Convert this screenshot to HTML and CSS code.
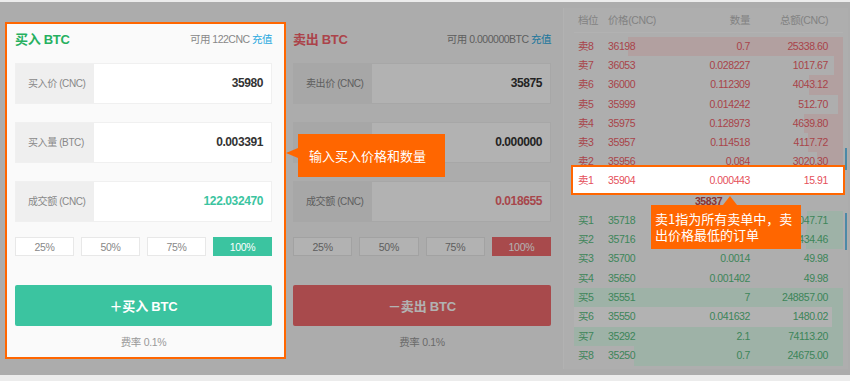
FILE: index.html
```html
<!DOCTYPE html>
<html lang="zh-CN">
<head>
    <meta charset="UTF-8">
    <meta name="viewport" content="width=device-width, initial-scale=1.0">
    <title>BTC 交易</title>
    <link rel="stylesheet" href="styles.css">
</head>
<body>
    <div class="stage">
        <div class="panel buy">
            <div class="phead">
                <h3>买入 BTC</h3>
                <span class="avail">可用 122CNC <a href="#">充值</a></span>
            </div>
            <div class="field"><label>买入价 (CNC)</label><span class="val">35980</span></div>
            <div class="field"><label>买入量 (BTC)</label><span class="val">0.003391</span></div>
            <div class="field"><label>成交额 (CNC)</label><span class="val sum">122.032470</span></div>
            <div class="pct">
                <button>25%</button>
                <button>50%</button>
                <button>75%</button>
                <button class="on">100%</button>
            </div>
            <button class="go">＋买入 BTC</button>
            <p class="fee">费率 0.1%</p>
        </div>

        <div class="panel sell">
            <div class="phead">
                <h3>卖出 BTC</h3>
                <span class="avail">可用 0.000000BTC <a href="#">充值</a></span>
            </div>
            <div class="field"><label>卖出价 (CNC)</label><span class="val">35875</span></div>
            <div class="field"><label>卖出量 (BTC)</label><span class="val">0.000000</span></div>
            <div class="field"><label>成交额 (CNC)</label><span class="val sum">0.018655</span></div>
            <div class="pct">
                <button>25%</button>
                <button>50%</button>
                <button>75%</button>
                <button class="on">100%</button>
            </div>
            <button class="go">－卖出 BTC</button>
            <p class="fee">费率 0.1%</p>
        </div>

        <div class="book">
            <div class="bhead"><span>档位</span><span>价格(CNC)</span><span>数量</span><span>总额(CNC)</span></div>
            <div class="asks">
                <div class="row ask" style="--d:215px"><span>卖8</span><span>36198</span><span>0.7</span><span>25338.60</span></div>
                <div class="row ask" style="--d:9px"><span>卖7</span><span>36053</span><span>0.028227</span><span>1017.67</span></div>
                <div class="row ask" style="--d:34px"><span>卖6</span><span>36000</span><span>0.112309</span><span>4043.12</span></div>
                <div class="row ask" style="--d:5px"><span>卖5</span><span>35999</span><span>0.014242</span><span>512.70</span></div>
                <div class="row ask" style="--d:39px"><span>卖4</span><span>35975</span><span>0.128973</span><span>4639.80</span></div>
                <div class="row ask" style="--d:35px"><span>卖3</span><span>35957</span><span>0.114518</span><span>4117.72</span></div>
                <div class="row ask" style="--d:26px"><span>卖2</span><span>35956</span><span>0.084</span><span>3020.30</span></div>
                <div class="row ask hl"><span>卖1</span><span>35904</span><span>0.000443</span><span>15.91</span></div>
            </div>
            <div class="last">35837</div>
            <div class="bids">
                <div class="row bid" style="--d:36px"><span>买1</span><span>35718</span><span>0.085328</span><span>3047.71</span></div>
                <div class="row bid" style="--d:37px"><span>买2</span><span>35716</span><span>0.096160</span><span>3434.46</span></div>
                <div class="row bid" style="--d:0px"><span>买3</span><span>35700</span><span>0.0014</span><span>49.98</span></div>
                <div class="row bid" style="--d:0px"><span>买4</span><span>35650</span><span>0.001402</span><span>49.98</span></div>
                <div class="row bid" style="--d:270px"><span>买5</span><span>35551</span><span>7</span><span>248857.00</span></div>
                <div class="row bid lite" style="--d:11px"><span>买6</span><span>35550</span><span>0.041632</span><span>1480.02</span></div>
                <div class="row bid" style="--d:270px"><span>买7</span><span>35292</span><span>2.1</span><span>74113.20</span></div>
                <div class="row bid" style="--d:209px"><span>买8</span><span>35250</span><span>0.7</span><span>24675.00</span></div>
            </div>
            <i class="mark m-ask"></i>
            <i class="mark m-bid"></i>
        </div>

        <div class="mask"></div>
        <div class="tip tip-left">输入买入价格和数量</div>
        <div class="tip tip-up">卖1指为所有卖单中，卖出价格最低的订单</div>
    </div>
</body>
</html>
```

FILE: styles.css
```css
body {
    margin: 0;
    background: #ececec;
    font-family: "Liberation Sans", "Noto Sans CJK SC", sans-serif;
    font-size: 11px;
    color: #333;
}
.stage {
    position: relative;
    display: flex;
    align-items: flex-start;
    height: 373px;
    margin-top: 2px;
    padding-left: 5px;
    background: #f7f7f7;
    box-sizing: border-box;
}

/* trade panels */
.panel {
    margin-top: 20px;
    padding: 0 12px 7px 8px;
    border: 2px solid transparent;
    background: #f7f7f7;
}
.panel.buy {
    position: relative;
    z-index: 3;
    width: 281px;
    box-sizing: border-box;
    border-color: #ff6600;
    background: #fafafa;
}
.panel.sell {
    width: 277px;
    box-sizing: border-box;
    padding-left: 5px;
    padding-right: 10px;
}
.phead {
    display: flex;
    justify-content: space-between;
    align-items: center;
    height: 28px;
    margin-bottom: 11px;
}
.phead h3 {
    margin: 0;
    font-size: 13px;
    font-weight: bold;
    letter-spacing: -0.3px;
}
.buy .phead h3 {
    color: #26b05f;
}
.sell .phead h3 {
    color: #f5616a;
}
.avail {
    color: #888;
    font-size: 10.5px;
    letter-spacing: -0.5px;
}
.avail a {
    color: #29a9df;
    text-decoration: none;
}
.field {
    display: flex;
    height: 41px;
    margin-bottom: 18px;
    border: 1px solid #f0f0f0;
    box-sizing: border-box;
    background: #fff;
}
.field label {
    width: 78px;
    padding-left: 12px;
    box-sizing: border-box;
    background: #efefef;
    color: #888;
    font-size: 10px;
    letter-spacing: -0.4px;
    white-space: nowrap;
    line-height: 39px;
}
.field .val {
    flex: 1;
    padding-right: 8px;
    text-align: right;
    line-height: 39px;
    font-size: 12px;
    font-weight: bold;
    letter-spacing: -0.4px;
    color: #333;
}
.buy .val.sum {
    color: #3bc4a0;
}
.sell .val.sum {
    color: #f0656c;
}
.pct {
    display: flex;
    gap: 7px;
    margin-top: -3px;
}
.pct button {
    flex: 1;
    height: 19px;
    padding: 0;
    border: 1px solid #e8e8e8;
    background: #fff;
    color: #888;
    font-family: inherit;
    font-size: 10.5px;
    letter-spacing: -0.3px;
}
.buy .pct .on {
    background: #3bc4a0;
    border-color: #3bc4a0;
    color: #fff;
}
.sell .pct .on {
    background: #f16b6d;
    border-color: #f16b6d;
    color: #fff;
}
.go {
    display: block;
    width: 100%;
    height: 41px;
    margin-top: 29px;
    border: none;
    border-radius: 2px;
    color: #fff;
    font-family: inherit;
    font-size: 13px;
    font-weight: bold;
    letter-spacing: -0.2px;
}
.buy .go {
    background: #3bc4a0;
}
.sell .go {
    background: #f16b6d;
}
.fee {
    margin: 8px 0 0;
    line-height: 16px;
    text-align: center;
    font-size: 10.5px;
    letter-spacing: -0.3px;
    color: #999;
}

/* order book */
.book {
    position: relative;
    width: 285px;
    margin-top: 6px;
    padding: 0 5px 3px 10px;
    box-sizing: border-box;
    background: #f9f9f9;
    border-left: 1px solid #fff;
    font-size: 10.5px;
    letter-spacing: -0.4px;
}
.bhead,
.row {
    display: grid;
    grid-template-columns: 30px 60px 82px 78px;
    padding: 0 16px 0 4px;
}
.bhead {
    height: 24px;
    line-height: 24px;
    border-bottom: 1px solid #fff;
    color: #bbb;
}
.bhead span:nth-child(n+3),
.row span:nth-child(n+3) {
    text-align: right;
}
.asks {
    margin-top: 4px;
}
.row {
    height: 19.2px;
    line-height: 19.2px;
}
.bids .row {
    height: 19.4px;
    line-height: 19.4px;
}
.ask {
    color: #f2626a;
    background: linear-gradient(to left, #ffe6e6 var(--d), transparent 0);
}
.bid {
    color: #58c081;
    background: linear-gradient(to left, #e3fff0 var(--d), transparent 0);
}
.bid.lite {
    background-color: #fff;
}
.row.hl {
    position: relative;
    z-index: 3;
    color: #e5505a;
}
.row.hl::before {
    content: "";
    position: absolute;
    top: -6px;
    bottom: -4px;
    left: -3px;
    right: -2px;
    z-index: -1;
    background: #fff;
    border: 2px solid #ff6600;
}
.last {
    height: 20px;
    line-height: 20px;
    text-align: center;
    font-weight: bold;
    color: #c44a4a;
}
.mark {
    position: absolute;
    right: 1px;
    width: 2px;
    background: #6cc4f0;
}
.m-ask {
    top: 140px;
    height: 22px;
}
.m-bid {
    top: 205px;
    height: 37px;
}

/* guide overlay */
.mask {
    position: absolute;
    top: 0;
    left: 0;
    right: 0;
    bottom: 0;
    z-index: 2;
    background: rgba(0, 0, 0, 0.3);
}
.tip {
    position: absolute;
    z-index: 4;
    box-sizing: border-box;
    background: #ff6600;
    color: #fff;
    font-family: "Noto Sans CJK SC", sans-serif;
    font-size: 13px;
}
.tip::before {
    content: "";
    position: absolute;
    border: solid transparent;
}
.tip-left {
    left: 298px;
    top: 132px;
    width: 147px;
    height: 43px;
    padding: 0 11px;
    line-height: 43px;
}
.tip-left::before {
    left: -12px;
    top: 14px;
    border-width: 5px 12px 5px 0;
    border-right-color: #ff6600;
}
.tip-up {
    left: 651px;
    top: 203px;
    width: 150px;
    height: 44px;
    padding: 6px 4px;
    line-height: 16px;
}
.tip-up::before {
    left: 72px;
    top: -9px;
    border-width: 0 7px 9px 7px;
    border-bottom-color: #ff6600;
}
```
